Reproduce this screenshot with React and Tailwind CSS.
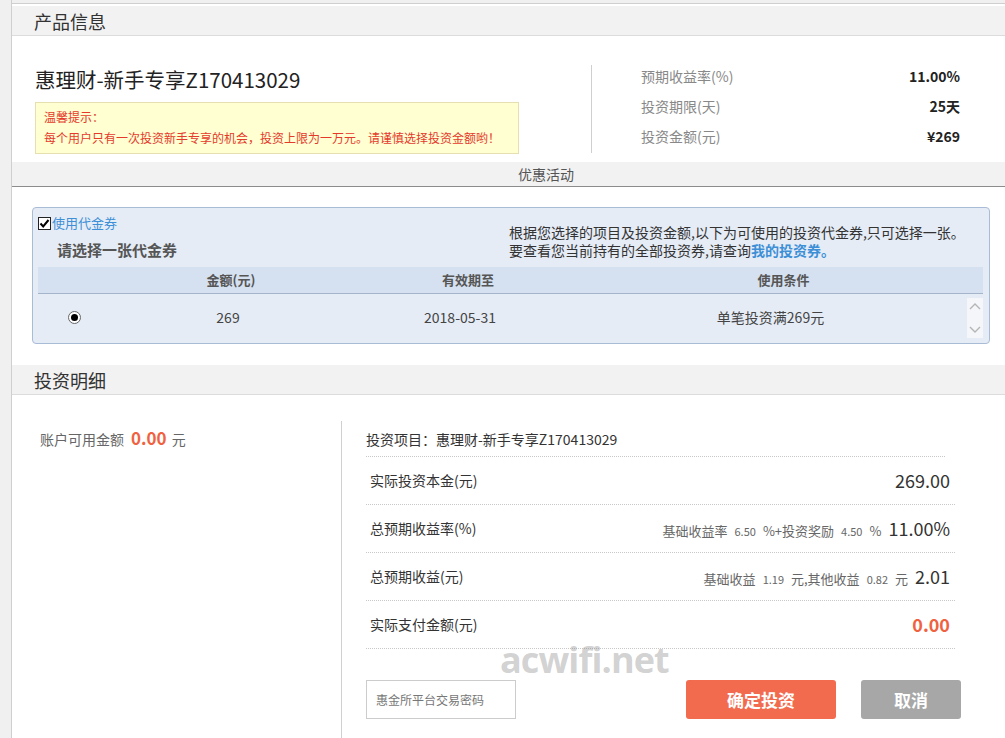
import React from "react";

const font = { fontFamily: '"Noto Sans CJK SC", "Noto Sans", sans-serif' };

function Band({ title, className = "" }) {
  return (
    <div className={"h-[30px] bg-[#f2f2f2] border-b border-[#dcdcdc] flex items-center pl-[22px] " + className}>
      <span className="text-[18px] leading-[24px] text-[#333]">{title}</span>
    </div>
  );
}

function StatRow({ label, value }) {
  return (
    <div className="h-[30px] flex items-center justify-between">
      <span className="text-[14px] text-[#888]">{label}</span>
      <span className="text-[14px] font-bold text-[#222]">{value}</span>
    </div>
  );
}

function DetailRow({ label, children }) {
  return (
    <div className="h-[48px] flex items-center justify-between pl-[4px] pr-[5px] border-b border-dotted border-[#c8c8c8]">
      <span className="text-[14px] text-[#333]">{label}</span>
      <div className="flex items-baseline gap-[7px] text-[#666]">{children}</div>
    </div>
  );
}

export default function App() {
  return (
    <div className="relative w-[1005px] h-[738px] overflow-hidden bg-white flex" style={font}>
      {/* left gutter */}
      <div className="w-[12px] shrink-0 bg-[#f0f0f0] border-r border-[#cfcfcf]" />

      <div className="flex-1 min-w-0 flex flex-col">
        <div className="h-[4px] bg-[#f0f0f0] border-b border-[#cfcfcf]" />
        <Band title="产品信息" className="mt-[2px]" />

        {/* product */}
        <div className="flex h-[117px]">
          <div className="w-[579px] pl-[23px] pt-[29px]">
            <div className="text-[20.5px] leading-[28px] text-[#222]">惠理财-新手专享Z170413029</div>
            <div className="mt-[9px] w-[484px] h-[52px] bg-[#ffffd2] border border-[#e6e0b0] pl-[8px] pt-[3px] text-[12px] leading-[21px] text-[#e43a2c]">
              <div>温馨提示：</div>
              <div>每个用户只有一次投资新手专享的机会，投资上限为一万元。请谨慎选择投资金额哟！</div>
            </div>
          </div>
          <div className="mt-[29px] h-[88px] border-l border-[#cfcfcf]" />
          <div className="flex-1 pl-[49px] pr-[45px] pt-[25px]">
            <StatRow label="预期收益率(%)" value="11.00%" />
            <StatRow label="投资期限(天)" value="25天" />
            <StatRow label="投资金额(元)" value="¥269" />
          </div>
        </div>

        {/* 优惠活动 */}
        <div className="mt-[9px] h-[25px] bg-[#f2f2f2] border-b border-[#8c8c8c] flex items-center pl-[506px]">
          <span className="text-[14px] text-[#555]">优惠活动</span>
        </div>

        <div className="mt-[20px] ml-[20px] mr-[15px] h-[137px] bg-[#e5ecf6] border border-[#a9bcd6] rounded-[4px] pl-[5px] pr-[6px]">
          <div className="flex h-[59px]">
            <div className="w-[471px]">
              <div className="flex items-center mt-[6px] h-[18px]">
                <span className="w-[13px] h-[13px] border border-[#222] bg-white flex items-center justify-center">
                  <svg width="11" height="11" viewBox="0 0 11 11">
                    <path d="M1.5 5.5 L4.2 8.5 L9.5 2" fill="none" stroke="#000" strokeWidth="2" />
                  </svg>
                </span>
                <span className="text-[13px] text-[#3d8fd6] ml-[1px]">使用代金券</span>
              </div>
              <div className="mt-[8px] pl-[19px] text-[15px] leading-[20px] font-bold text-[#555]">请选择一张代金券</div>
            </div>
            <div className="pt-[15px] text-[14px] leading-[18px] text-[#333] whitespace-nowrap">
              <div>根据您选择的项目及投资金额,以下为可使用的投资代金券,只可选择一张。</div>
              <div>
                要查看您当前持有的全部投资券,请查询<span className="font-bold text-[#3d8fd6]">我的投资券。</span>
              </div>
            </div>
          </div>

          <div className="grid grid-cols-[72px_242px_232px_1fr] h-[27px] items-center bg-[#d5e1f0] border-b border-[#a3b4cb] text-[13px] font-bold text-[#555] text-center">
            <span />
            <span>金额(元)</span>
            <span>有效期至</span>
            <span>使用条件</span>
          </div>
          <div className="grid grid-cols-[72px_236px_228px_1fr_16px] h-[47px] items-center text-[14px] text-[#444] text-center">
            <span className="flex justify-center">
              <span className="w-[13px] h-[13px] rounded-full border border-[#666] bg-white flex items-center justify-center">
                <span className="w-[7px] h-[7px] rounded-full bg-black" />
              </span>
            </span>
            <span>269</span>
            <span>2018-05-31</span>
            <span>单笔投资满269元</span>
            <span className="h-[40px] bg-[#f4f6f9] flex flex-col items-center justify-between py-[4px]">
              <svg width="12" height="8" viewBox="0 0 12 8">
                <path d="M1 7 L6 2 L11 7" fill="none" stroke="#b5b5b5" strokeWidth="1.4" />
              </svg>
              <svg width="12" height="8" viewBox="0 0 12 8">
                <path d="M1 1 L6 6 L11 1" fill="none" stroke="#b5b5b5" strokeWidth="1.4" />
              </svg>
            </span>
          </div>
        </div>

        <Band title="投资明细" className="mt-[21px]" />

        {/* detail */}
        <div className="flex flex-1">
          <div className="w-[329px] shrink-0 pl-[28px] pt-[30px]">
            <div className="flex items-baseline text-[14px] text-[#666]">
              <span>账户可用金额</span>
              <span className="ml-[7px] text-[17px] font-bold text-[#f0623f]">0.00</span>
              <span className="ml-[5px]">元</span>
            </div>
          </div>
          <div className="mt-[26px] flex-1 min-w-0 border-l border-[#d0d0d0] pl-[24px]">
            <div className="w-[589px]">
              <div className="h-[36px] pt-[8px] border-b border-dotted border-[#c8c8c8] text-[14px] leading-[20px] text-[#333] mr-[10px]">
                投资项目：惠理财-新手专享Z170413029
              </div>
              <DetailRow label="实际投资本金(元)">
                <span className="text-[18px] text-[#333]">269.00</span>
              </DetailRow>
              <DetailRow label="总预期收益率(%)">
                <span className="text-[13px]">基础收益率</span>
                <span className="text-[11px]">6.50</span>
                <span className="text-[13px]">%+投资奖励</span>
                <span className="text-[11px]">4.50</span>
                <span className="text-[13px]">%</span>
                <span className="text-[18px] text-[#333]">11.00%</span>
              </DetailRow>
              <DetailRow label="总预期收益(元)">
                <span className="text-[13px]">基础收益</span>
                <span className="text-[11px]">1.19</span>
                <span className="text-[13px]">元,其他收益</span>
                <span className="text-[11px]">0.82</span>
                <span className="text-[13px]">元</span>
                <span className="text-[18px] text-[#333]">2.01</span>
              </DetailRow>
              <DetailRow label="实际支付金额(元)">
                <span className="text-[18px] font-bold text-[#f0623f]">0.00</span>
              </DetailRow>
            </div>

            <div className="mt-[31px] flex items-center">
              <div className="w-[150px] h-[39px] shrink-0 border border-[#cccccc] flex items-center pl-[9px] text-[12px] text-[#777]">
                惠金所平台交易密码
              </div>
              <button className="ml-[170px] w-[150px] h-[39px] shrink-0 rounded-[3px] bg-[#f26b4e] text-white text-[17px] font-bold">
                确定投资
              </button>
              <button className="ml-[25px] w-[100px] h-[39px] shrink-0 rounded-[3px] bg-[#a7a7a7] text-white text-[17px] font-bold">
                取消
              </button>
            </div>
          </div>
        </div>
      </div>

      {/* watermark */}
      <div className="absolute left-[500px] top-[638px] text-[36px] font-bold text-[#8a8a8a]/40 tracking-tight leading-[44px]" style={{ fontFamily: '"Open Sans", sans-serif' }}>
        acwifi.net
      </div>
    </div>
  );
}
